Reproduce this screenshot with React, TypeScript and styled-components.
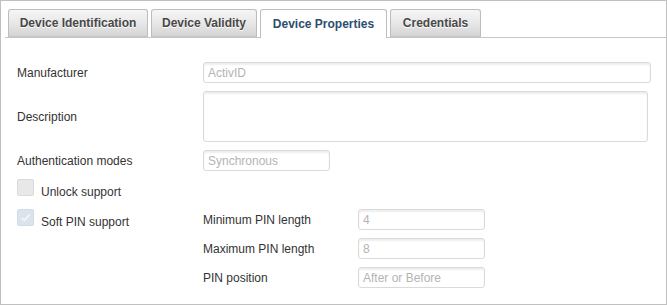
import * as React from 'react'
import styled, { createGlobalStyle } from 'styled-components'

const GlobalStyle = createGlobalStyle`
  html, body {
    margin: 0;
    padding: 0;
    background: #fff;
  }
  body {
    font-family: "Liberation Sans", Arial, sans-serif;
  }
`

const Frame = styled.div`
  box-sizing: border-box;
  width: 667px;
  height: 305px;
  border: 1px solid #c0c0c0;
  background: #fff;
`

const TabBar = styled.div`
  display: flex;
  align-items: flex-end;
  gap: 3px;
  height: 36px;
  margin-left: 4px;
  padding-left: 3px;
  border-bottom: 1px solid #c6c6c6;
`

type TabProps = {
  $active?: boolean
  $width: number
}

const Tab = styled.div<TabProps>`
  box-sizing: border-box;
  display: flex;
  align-items: center;
  justify-content: center;
  width: ${({ $width }) => $width}px;
  height: ${({ $active }) => ($active ? '29px' : '28px')};
  margin-bottom: ${({ $active }) => ($active ? '-1px' : '0')};
  padding-bottom: ${({ $active }) => ($active ? '1px' : '0')};
  border: 1px solid #bdbdbd;
  border-bottom: ${({ $active }) => ($active ? 'none' : '1px solid #c6c6c6')};
  border-radius: 3px 3px 0 0;
  background: ${({ $active }) =>
    $active ? '#fff' : 'linear-gradient(to bottom, #f6f6f6 0%, #e6e6e6 55%, #d4d4d4 100%)'};
  color: ${({ $active }) => ($active ? '#2c4d70' : '#484848')};
  font-size: 12px;
  font-weight: bold;
  text-shadow: ${({ $active }) => ($active ? 'none' : '0 1px 0 #fff')};
  white-space: nowrap;
`

const Panel = styled.div`
  padding: 24px 15px 0 16px;
`

const FormGrid = styled.div`
  display: grid;
  grid-template-columns: 186px 1fr;
  row-gap: 8px;
  align-items: center;
`

const Label = styled.div`
  font-size: 12px;
  color: #333;
  white-space: nowrap;
`

type FieldProps = {
  $width?: number
  $height?: number
}

const Field = styled.div<FieldProps>`
  box-sizing: border-box;
  width: ${({ $width }) => ($width ? `${$width}px` : '100%')};
  height: ${({ $height }) => $height ?? 21}px;
  padding: 3px 4px 0;
  border: 1px solid #dadada;
  border-radius: 3px;
  background: #fff;
  box-shadow: inset 0 2px 2px rgba(0, 0, 0, 0.07);
  font-size: 12px;
  line-height: 14px;
  color: #b4b4b4;
`

const LowerGrid = styled.div`
  display: grid;
  grid-template-columns: 186px 155px 127px;
  grid-template-rows: 22px 21px 21px 21px;
  row-gap: 8px;
  margin-top: 8px;
  align-items: center;
`

const CheckRow = styled.label<{ $row: number }>`
  grid-column: 1;
  grid-row: ${({ $row }) => $row};
  align-self: start;
  display: flex;
  align-items: flex-start;
  gap: 7px;
  font-size: 12px;
  line-height: 14px;
  color: #333;
`

const CheckText = styled.span`
  padding-top: 6px;
`

const CheckBox = styled.span<{ $checked?: boolean }>`
  box-sizing: border-box;
  display: flex;
  align-items: center;
  justify-content: center;
  width: 17px;
  height: 17px;
  flex: none;
  border: 1px solid ${({ $checked }) => ($checked ? '#d2dce6' : '#dadada')};
  border-radius: 2px;
  background: ${({ $checked }) => ($checked ? '#dbe4ed' : '#e8e8e8')};
`

const RightLabel = styled(Label)<{ $row: number }>`
  grid-column: 2;
  grid-row: ${({ $row }) => $row};
`

const RightField = styled(Field)<{ $row: number }>`
  grid-column: 3;
  grid-row: ${({ $row }) => $row};
`

const tabs = [
  { title: 'Device Identification', width: 140 },
  { title: 'Device Validity', width: 106 },
  { title: 'Device Properties', width: 127 },
  { title: 'Credentials', width: 91 },
]

const pinFields = [
  { label: 'Minimum PIN length', value: '4' },
  { label: 'Maximum PIN length', value: '8' },
  { label: 'PIN position', value: 'After or Before' },
]

const App: React.FC = () => {
  return (
    <>
      <GlobalStyle />
      <Frame>
        <TabBar>
          {tabs.map((t) => (
            <Tab key={t.title} $width={t.width} $active={t.title === 'Device Properties'}>
              {t.title}
            </Tab>
          ))}
        </TabBar>

        <Panel>
          <FormGrid>
            <Label>Manufacturer</Label>
            <Field>ActivID</Field>

            <Label>Description</Label>
            <Field $width={445} $height={51} />

            <Label>Authentication modes</Label>
            <Field $width={127}>Synchronous</Field>
          </FormGrid>

          <LowerGrid>
            <CheckRow $row={1}>
              <CheckBox />
              <CheckText>Unlock support</CheckText>
            </CheckRow>
            <CheckRow $row={2}>
              <CheckBox $checked>
                <svg width="11" height="9" viewBox="0 0 11 9">
                  <path d="M1.5 4.8 L4.2 7.3 L9.5 1.8" fill="none" stroke="#f3f6f9" strokeWidth="1.8" />
                </svg>
              </CheckBox>
              <CheckText>Soft PIN support</CheckText>
            </CheckRow>

            {pinFields.map((f, i) => (
              <React.Fragment key={f.label}>
                <RightLabel $row={i + 2}>{f.label}</RightLabel>
                <RightField $row={i + 2}>{f.value}</RightField>
              </React.Fragment>
            ))}
          </LowerGrid>
        </Panel>
      </Frame>
    </>
  )
}

export default App
